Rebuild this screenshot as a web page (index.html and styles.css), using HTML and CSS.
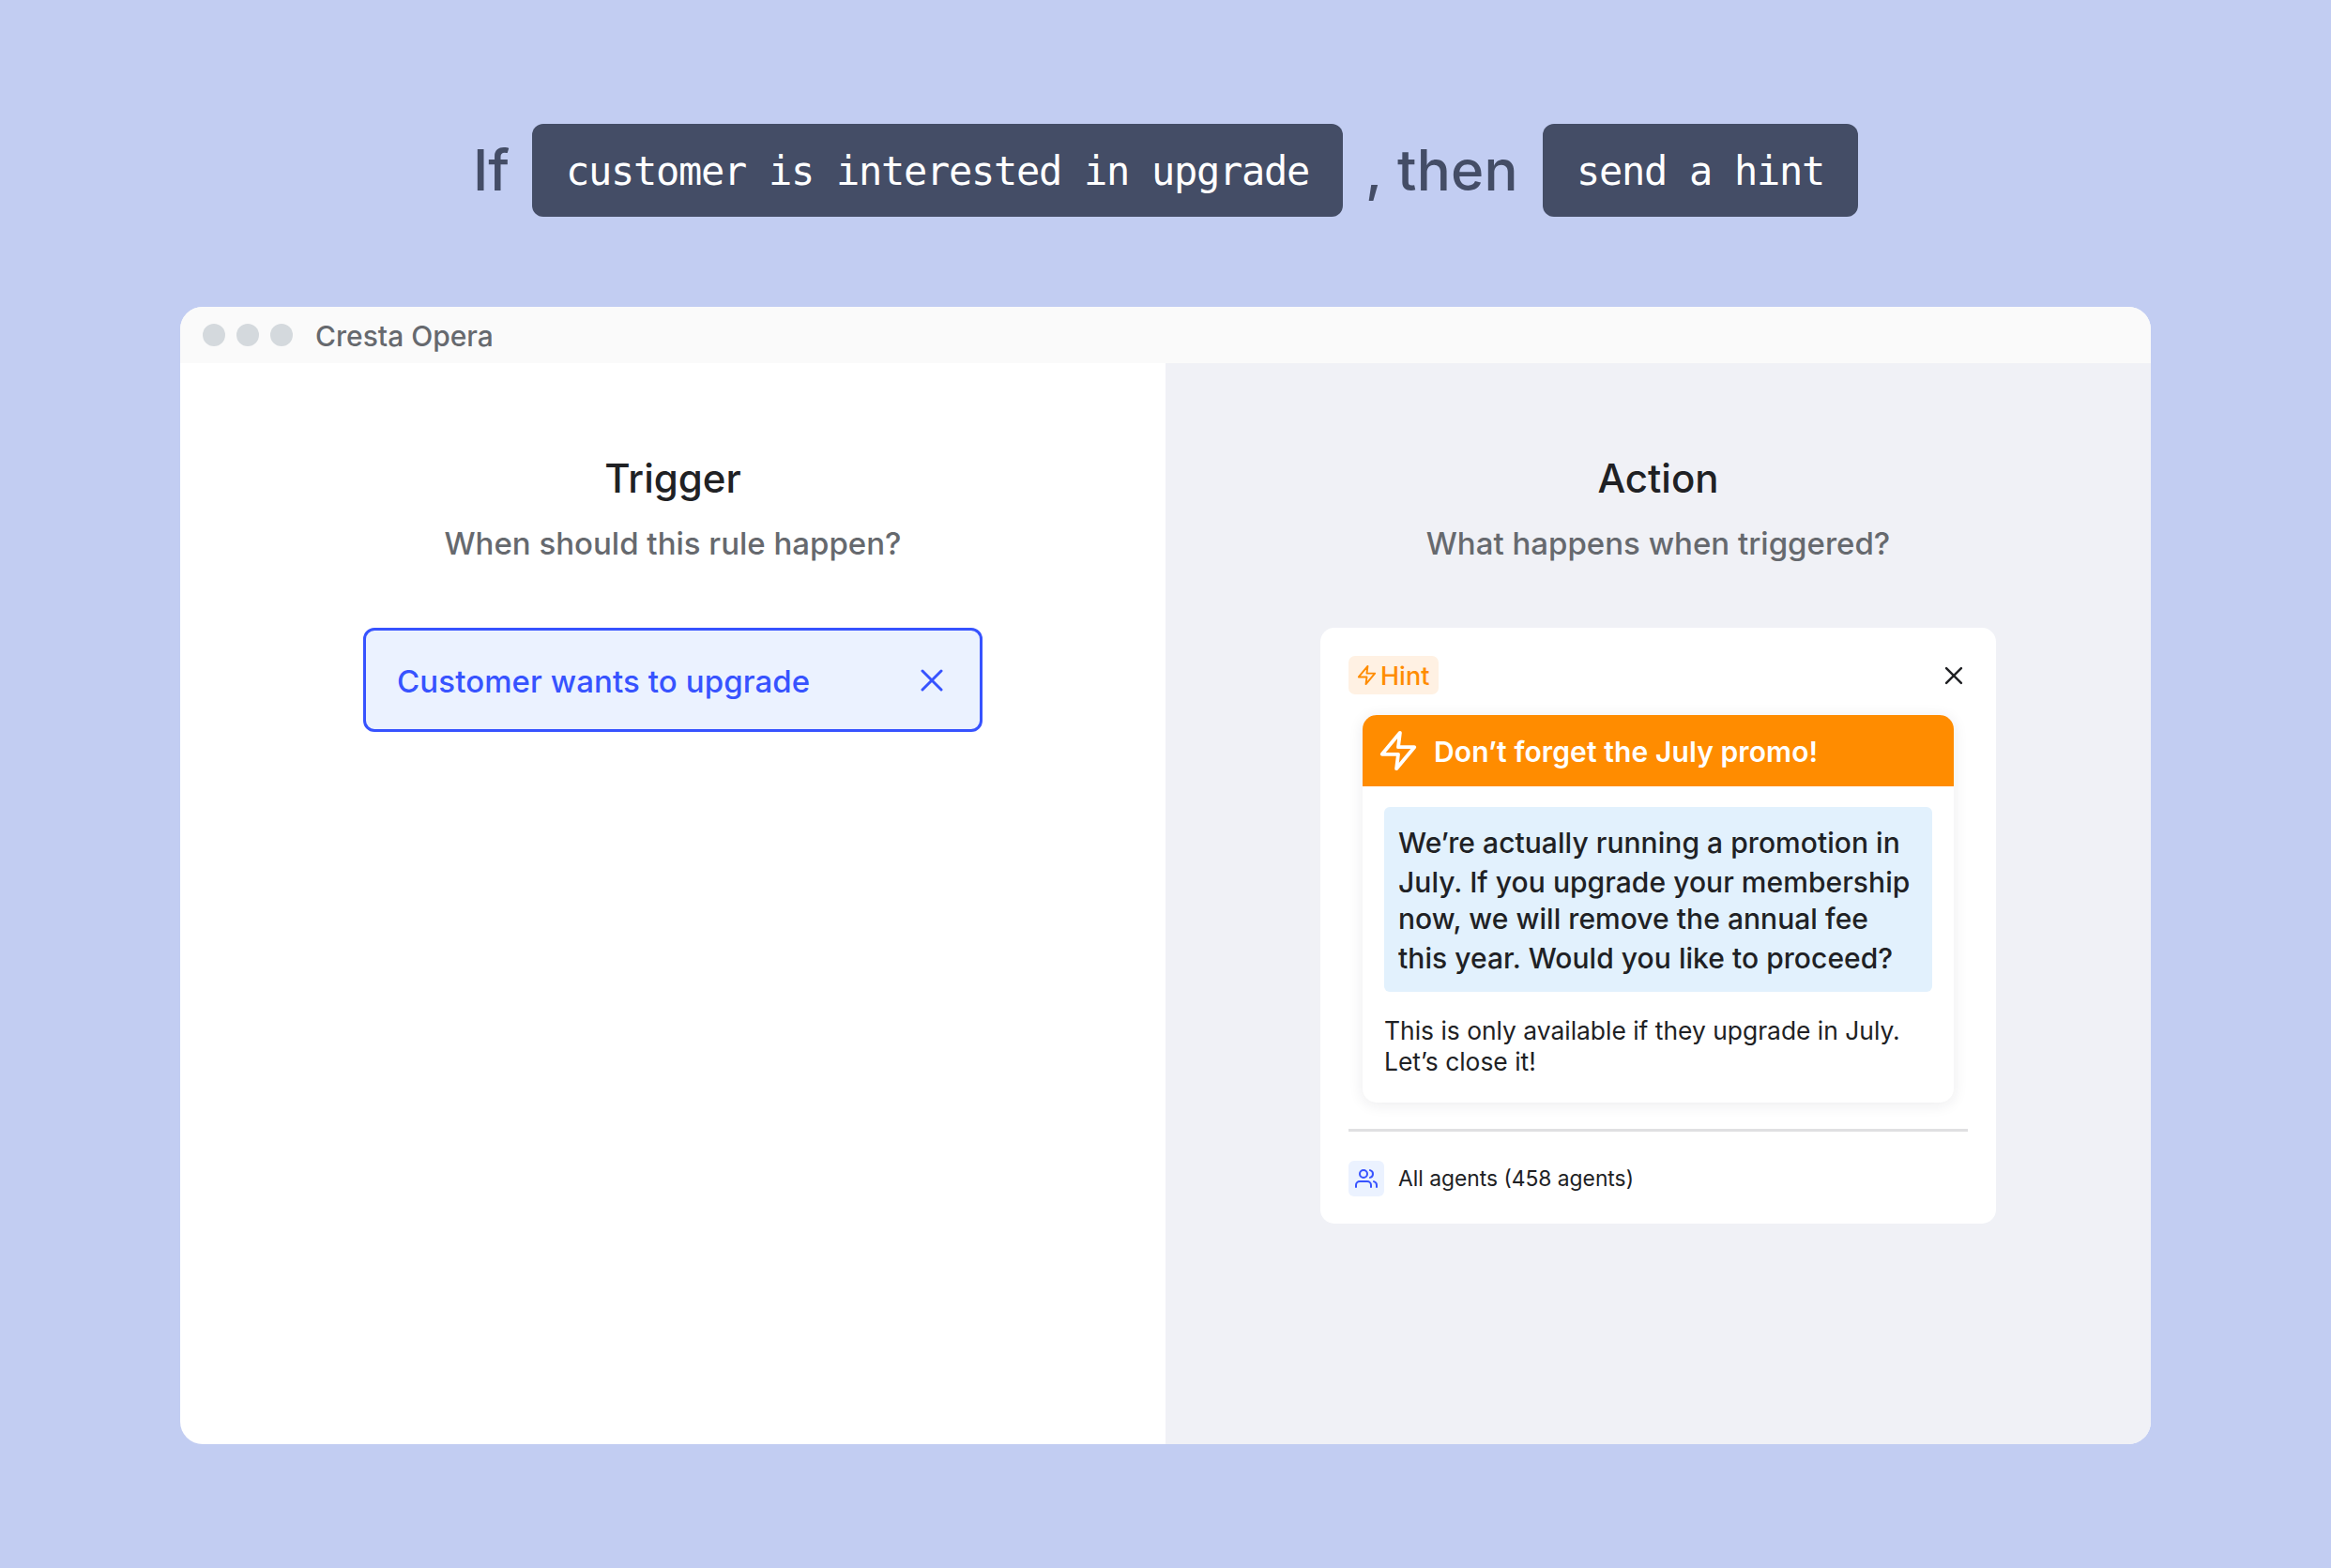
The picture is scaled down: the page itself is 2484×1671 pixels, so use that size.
FILE: index.html
```html
<!DOCTYPE html>
<html lang="en">
<head>
<meta charset="utf-8">
<title>Cresta Opera</title>
<link rel="stylesheet" href="styles.css">
</head>
<body>
<header class="rule">
  <span class="word word-if">If</span>
  <code class="chip">customer is interested in upgrade</code>
  <span class="word word-then">, then</span>
  <code class="chip">send a hint</code>
</header>
<main class="window">
  <div class="titlebar">
    <i class="dot"></i><i class="dot"></i><i class="dot"></i>
    <span class="app-name">Cresta Opera</span>
  </div>
  <div class="panes">
    <section class="pane">
      <h2 class="pane-title">Trigger</h2>
      <p class="pane-sub">When should this rule happen?</p>
      <div class="trigger">
        <span class="trigger-label">Customer wants to upgrade</span>
        <svg class="trigger-close" viewBox="0 0 24 24"><path d="M2 2 22 22M22 2 2 22"/></svg>
      </div>
    </section>
    <section class="pane pane-action">
      <h2 class="pane-title">Action</h2>
      <p class="pane-sub">What happens when triggered?</p>
      <article class="action">
        <div class="action-head">
          <span class="tag">
            <svg class="tag-icon" viewBox="0 0 24 24"><path d="M13 2 3 14h9l-1 8 10-12h-9z"/></svg>
            <span class="tag-label">Hint</span>
          </span>
          <svg class="action-close" viewBox="0 0 24 24"><path d="M2.500 2.500 21.500 21.500M21.500 2.500 2.500 21.500"/></svg>
        </div>
        <div class="hint">
          <div class="hint-head">
            <svg class="hint-icon" viewBox="0 0 24 24"><path d="M13 2 3 14h9l-1 8 10-12h-9z"/></svg>
            <span class="hint-title">Don’t forget the July promo!</span>
          </div>
          <div class="hint-body">
            <p class="quote"><span class="line">We’re actually running a promotion in</span><span class="line">July. If you upgrade your membership</span><span class="line">now, we will remove the annual fee</span><span class="line">this year. Would you like to proceed?</span></p>
            <p class="note">This is only available if they upgrade in July.<br>Let’s close it!</p>
          </div>
        </div>
        <footer class="audience">
          <span class="audience-badge">
            <svg class="audience-icon" viewBox="0 0 24 24"><path d="M17 21v-2a4 4 0 0 0-4-4H5a4 4 0 0 0-4 4v2M23 21v-2a4 4 0 0 0-3-3.870M16 3.130a4 4 0 0 1 0 7.750"/><circle cx="9" cy="7" r="4"/></svg>
          </span>
          <span class="audience-label">All agents (458 agents)</span>
        </footer>
      </article>
    </section>
  </div>
</main>
</body>
</html>
```
FILE: styles.css
```css
* { box-sizing: border-box; margin: 0; padding: 0; }
body {
  width: 2484px;
  height: 1671px;
  overflow: hidden;
  padding-top: 132px;
  background: #c2cdf2;
  color: #202124;
  font-family: Inter, sans-serif;
}
svg { display: block; flex: none; fill: none; stroke: currentColor; stroke-linecap: round; stroke-linejoin: round; }
.rule { display: flex; align-items: center; height: 99px; padding-left: 504px; white-space: pre; }
.word { color: #444d66; font-size: 60px; line-height: 99px; font-weight: 500; }
.word-if { width: 63px; }
.word-then { width: 213px; padding-left: 24px; letter-spacing: .2px; }
.chip {
  flex: none;
  height: 99px;
  padding: 0 36px;
  border-radius: 12px;
  background: #444d66;
  color: #fff;
  font: 42px/102px "DejaVu Sans Mono", monospace;
  letter-spacing: -1.285px;
}
.window { width: 2100px; height: 1212px; margin: 96px 0 0 192px; border-radius: 24px; overflow: hidden; background: #fff; }
.titlebar { display: flex; align-items: center; gap: 12px; height: 60px; padding-left: 24px; background: #fafafa; }
.dot { width: 24px; height: 24px; border-radius: 50%; background: #d4d9dd; }
.app-name { margin-left: 12px; padding-top: 2px; color: #66696e; font-size: 30px; line-height: 58px; font-weight: 500; }
.panes { display: flex; height: 1152px; }
.pane { display: flex; flex-direction: column; align-items: center; width: 1050px; padding-top: 93px; }
.pane-action { background: #f0f1f6; }
.pane-title { font-size: 42px; line-height: 60px; font-weight: 500; }
.pane-sub { margin-top: 15px; color: #66696e; font-size: 33px; line-height: 48px; font-weight: 500; }
.trigger {
  display: flex;
  align-items: center;
  justify-content: space-between;
  width: 660px;
  height: 111px;
  margin-top: 66px;
  padding: 0 39px 0 33px;
  border: 3px solid #3753ff;
  border-radius: 12px;
  background: #ebf2ff;
  color: #3753ff;
}
.trigger-label { padding-top: 2px; font-size: 33px; line-height: 48px; font-weight: 500; letter-spacing: .1px; }
.trigger-close { width: 24px; height: 24px; stroke-width: 3; }
.action { width: 720px; height: 635px; margin-top: 66px; padding: 30px; border-radius: 15px; background: #fff; }
.action-head { display: flex; align-items: center; justify-content: space-between; height: 41px; padding-right: 5px; }
.tag { display: flex; align-items: center; width: 96px; height: 41px; padding-left: 8px; border-radius: 7px; background: #fff1e3; color: #ff8c00; }
.tag-icon { width: 23px; height: 23px; stroke-width: 2; }
.tag-label { margin-left: 3px; padding-top: 2px; font-size: 27px; line-height: 39px; font-weight: 500; }
.action-close { width: 20px; height: 20px; stroke-width: 3; }
.hint { width: 630px; height: 413px; margin: 22px 0 0 15px; border-radius: 15px; overflow: hidden; background: #fff; box-shadow: 0 2px 16px rgba(32, 33, 60, .09); }
.hint-head { display: flex; align-items: center; height: 76px; padding-left: 15px; background: #ff8c00; color: #fff; }
.hint-icon { width: 46px; height: 46px; stroke-width: 2; }
.hint-title { margin-left: 15px; padding-top: 3px; font-size: 30px; line-height: 45px; font-weight: 600; letter-spacing: .1px; }
.hint-body { padding: 22px 23px; }
.quote { width: 584px; height: 197px; padding: 17px 15px; border-radius: 6px; background: #e2f1fd; font-size: 30px; font-weight: 500; letter-spacing: .05px; white-space: nowrap; }
.line { display: block; height: 42px; line-height: 42px; }
.line:nth-child(2) { height: 39px; }
.note { margin-top: 25px; font-size: 26.4px; line-height: 33px; white-space: nowrap; }
.audience { display: flex; align-items: center; height: 99px; margin-top: 28px; padding-top: 3px; border-top: 3px solid #e0e0e2; }
.audience-badge { display: grid; place-items: center; width: 38px; height: 38px; border-radius: 6px; background: #ebf2ff; color: #3753ff; }
.audience-icon { width: 24px; height: 24px; stroke-width: 2; }
.audience-label { margin-left: 15px; font-size: 22.8px; line-height: 36px; }
```
